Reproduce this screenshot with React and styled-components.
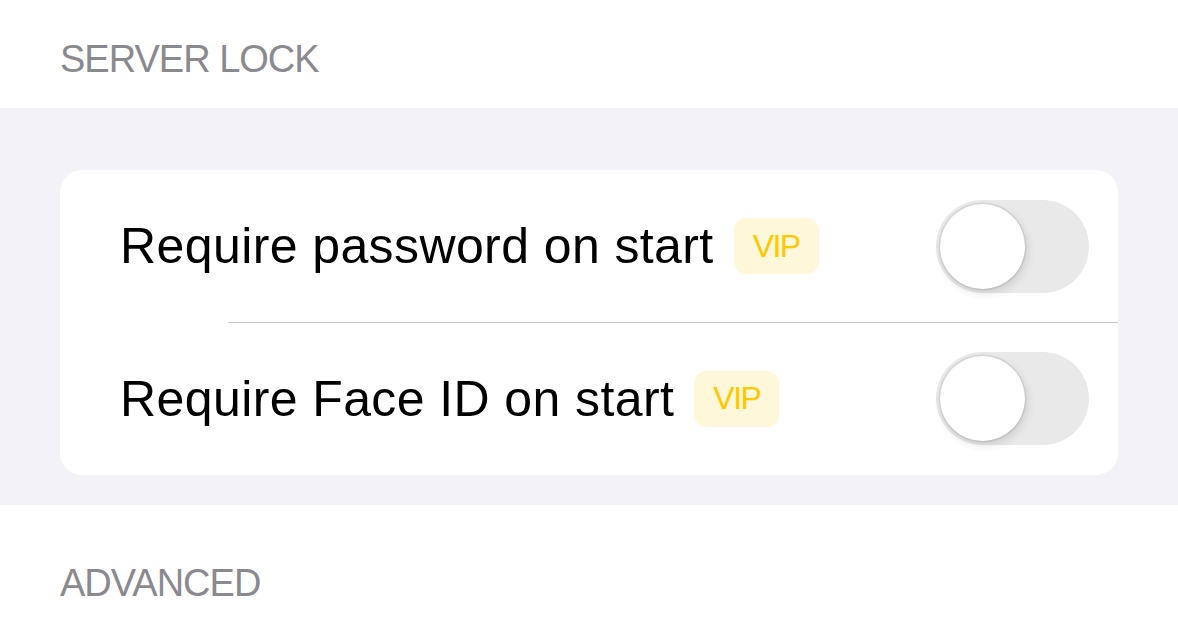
import styled, { createGlobalStyle } from "styled-components";

const GlobalStyle = createGlobalStyle`
  html, body {
    margin: 0;
    padding: 0;
    background: #ffffff;
    font-family: "Liberation Sans", Arial, sans-serif;
  }
`;

const rows = [
  { label: "Require password on start", vip: true },
  { label: "Require Face ID on start", vip: true },
];

const Toggle = ({ on }) => (
  <Track $on={on}>
    <Knob $on={on} />
  </Track>
);

const App = () => {
  return (
    <Page>
      <GlobalStyle />
      <SectionHeader>SERVER LOCK</SectionHeader>
      <GroupBand>
        <Card>
          {rows.map((row, i) => (
            <Row key={row.label} $divider={i > 0}>
              <Label>{row.label}</Label>
              {row.vip && <Badge>VIP</Badge>}
              <Spacer />
              <Toggle on={false} />
            </Row>
          ))}
        </Card>
      </GroupBand>
      <SectionHeader $bottom>ADVANCED</SectionHeader>
    </Page>
  );
};

export default App;

const Page = styled.div`
  width: 1178px;
  height: 620px;
  overflow: hidden;
  background: #ffffff;
`;

const SectionHeader = styled.div`
  height: ${(p) => (p.$bottom ? "115px" : "108px")};
  box-sizing: border-box;
  padding: ${(p) => (p.$bottom ? "57px" : "38px")} 60px 0;
  font-size: 38px;
  line-height: 42px;
  color: #8a8a8e;
  letter-spacing: -1px;
`;

const GroupBand = styled.div`
  background: #f2f2f7;
  padding: 62px 60px 30px;
`;

const Card = styled.div`
  background: #ffffff;
  border-radius: 22px;
  overflow: hidden;
`;

const Row = styled.div`
  position: relative;
  display: flex;
  align-items: center;
  height: ${(p) => (p.$divider ? "153px" : "152px")};
  padding: 0 29px 0 60px;

  ${(p) =>
    p.$divider &&
    `
    &::before {
      content: "";
      position: absolute;
      top: 0;
      left: 168px;
      right: 0;
      height: 1px;
      background: #c8c8cc;
    }
  `}
`;

const Label = styled.span`
  font-size: 50px;
  color: #000000;
  letter-spacing: 0.4px;
`;

const Badge = styled.span`
  margin-left: 20px;
  height: 56px;
  padding: 0 19px 0 19px;
  display: inline-flex;
  align-items: center;
  border-radius: 12px;
  background: #fff7d9;
  color: #fdc800;
  font-size: 32px;
  letter-spacing: -1.5px;
`;

const Spacer = styled.div`
  flex: 1;
`;

const Track = styled.div`
  position: relative;
  width: 153px;
  height: 93px;
  border-radius: 47px;
  background: ${(p) => (p.$on ? "#34c759" : "#e9e9ea")};
`;

const Knob = styled.div`
  position: absolute;
  top: 4px;
  left: ${(p) => (p.$on ? "64px" : "4px")};
  width: 85px;
  height: 85px;
  border-radius: 50%;
  background: #ffffff;
  box-shadow: 2px 4px 10px rgba(0, 0, 0, 0.13), 0 0 0 1.5px rgba(0, 0, 0, 0.07);
`;
